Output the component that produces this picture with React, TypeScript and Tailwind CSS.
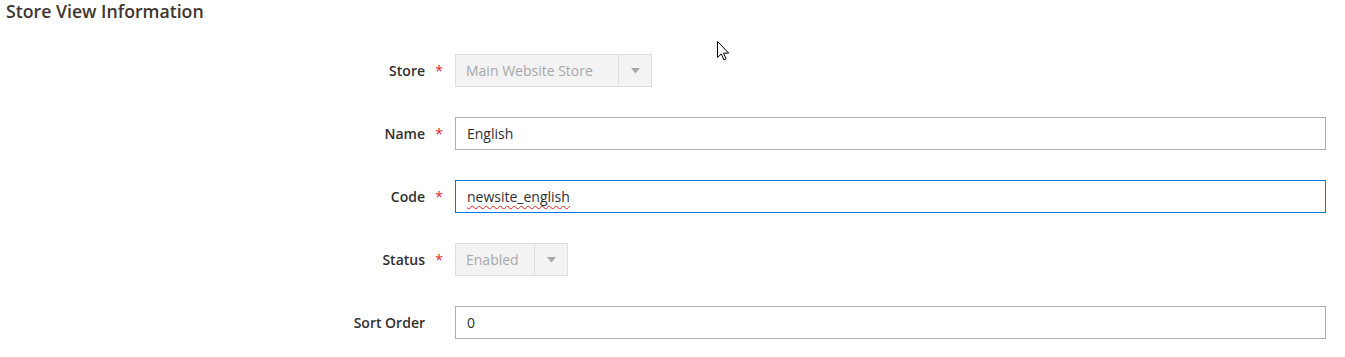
const font = { fontFamily: '"Open Sans", "Liberation Sans", sans-serif' };

function Label({ text, required }: { text: string; required?: boolean }) {
  return (
    <div className="w-[455px] shrink-0 flex items-center justify-end pr-[8px] h-[33px]">
      <span className="text-[14px] font-semibold text-[#303030]">{text}</span>
      <span className={`ml-[6px] w-[16px] text-center text-[14px] ${required ? 'text-[#e22626]' : 'text-transparent'}`}>*</span>
    </div>
  );
}

function DisabledSelect({ value, width }: { value: string; width: string }) {
  return (
    <div className={`${width} h-[33px] flex border border-[#dedede] bg-[#f3f3f3] text-[14px] text-[#a8a8a8]`}>
      <div className="flex-1 flex items-center pl-[10px]">{value}</div>
      <div className="w-[33px] border-l border-[#dedede] flex items-center justify-center">
        <svg width="9" height="6" viewBox="0 0 9 6">
          <path d="M0 0h9L4.5 5.5z" fill="#a8a8a8" />
        </svg>
      </div>
    </div>
  );
}

function TextBox({ children, focused }: { children: React.ReactNode; focused?: boolean }) {
  return (
    <div
      className={`w-[871px] h-[33px] flex items-center pl-[11px] bg-white text-[14px] text-[#303030] border ${
        focused ? 'border-[#007bdb]' : 'border-[#adadad]'
      }`}
    >
      {children}
    </div>
  );
}

export default function App() {
  return (
    <div className="relative w-[1345px] h-[357px] bg-white overflow-hidden" style={font}>
      <h2 className="pl-[6px] -mt-[1px] text-[17.7px] leading-[24px] font-semibold text-[#41362f]">Store View Information</h2>

      <div className="mt-[31px] flex flex-col gap-[30px]">
        <div className="flex">
          <Label text="Store" required />
          <DisabledSelect value="Main Website Store" width="w-[197px]" />
        </div>
        <div className="flex">
          <Label text="Name" required />
          <TextBox>English</TextBox>
        </div>
        <div className="flex">
          <Label text="Code" required />
          <TextBox focused>
            <span className="underline decoration-wavy decoration-[#e02020] decoration-1 underline-offset-[3px]">newsite_english</span>
          </TextBox>
        </div>
        <div className="flex">
          <Label text="Status" required />
          <DisabledSelect value="Enabled" width="w-[113px]" />
        </div>
        <div className="flex">
          <Label text="Sort Order" />
          <TextBox>0</TextBox>
        </div>
      </div>

      {/* mouse pointer */}
      <svg className="absolute left-[717px] top-[41px]" width="12" height="20" viewBox="0 0 12 20">
        <path d="M0.5 0.5v16l3.8-3.6 2.6 6 2.2-1-2.6-5.8h5.2z" fill="white" stroke="black" strokeWidth="1" strokeLinejoin="miter" />
      </svg>
    </div>
  );
}
